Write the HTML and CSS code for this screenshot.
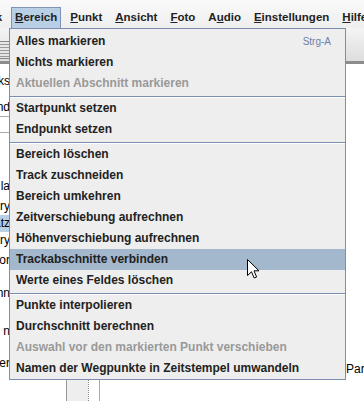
FILE: index.html
```html
<!DOCTYPE html>
<html lang="de">
<head>
  <meta charset="UTF-8" />
  <title>GpsPrune - Bereich</title>
  <link rel="stylesheet" href="styles.css">
</head>
<body>
<div class="screen">

  <!-- Menüleiste -->
  <div class="menubar">
    <span class="menu first">Track</span>
    <span class="menu active"><u>B</u>ereich</span>
    <span class="menu"><u>P</u>unkt</span>
    <span class="menu"><u>A</u>nsicht</span>
    <span class="menu"><u>F</u>oto</span>
    <span class="menu">A<u>u</u>dio</span>
    <span class="menu"><u>E</u>instellungen</span>
    <span class="menu"><u>H</u>ilfe</span>
  </div>

  <!-- Werkzeugleiste (fast ganz verdeckt) -->
  <div class="toolbar">
    <div class="tool-icon"></div>
  </div>

  <!-- Arbeitsbereich hinter dem Menü -->
  <div class="workspace">
    <div class="sidebar">
      <div class="cut row r-tracks"><span>Tracks</span></div>
      <div class="cut row r-stand"><span>Stand</span></div>
      <div class="rule"></div>
      <div class="rule"></div>
      <div class="cut row r-la"><span>Darstellung la</span></div>
      <div class="cut row r-small"><span>Summary</span></div>
      <div class="cut row selected"><span>Datensatz</span></div>
      <div class="cut row"><span>Summary</span></div>
      <div class="cut row r-small"><span>Editor</span></div>
      <div class="cut row r-gap"><span>Beginn</span></div>
      <div class="cut row r-gap2"><span>Ende n</span></div>
      <div class="cut row r-gap3"><span>Bearbeiter</span></div>
    </div>
    <div class="divider">
      <div class="divider-grip"></div>
    </div>
    <div class="details">
      <div class="details-label">Parameter</div>
    </div>
  </div>

  <!-- Aufgeklapptes Menü "Bereich" -->
  <div class="popup">
    <div class="item">Alles markieren<span class="accel">Strg-A</span></div>
    <div class="item">Nichts markieren</div>
    <div class="item disabled">Aktuellen Abschnitt markieren</div>
    <div class="sep"></div>
    <div class="item">Startpunkt setzen</div>
    <div class="item">Endpunkt setzen</div>
    <div class="sep"></div>
    <div class="item">Bereich löschen</div>
    <div class="item">Track zuschneiden</div>
    <div class="item">Bereich umkehren</div>
    <div class="item">Zeitverschiebung aufrechnen</div>
    <div class="item">Höhenverschiebung aufrechnen</div>
    <div class="item hover">Trackabschnitte verbinden</div>
    <div class="item">Werte eines Feldes löschen</div>
    <div class="sep"></div>
    <div class="item">Punkte interpolieren</div>
    <div class="item">Durchschnitt berechnen</div>
    <div class="item disabled">Auswahl vor den markierten Punkt verschieben</div>
    <div class="item">Namen der Wegpunkte in Zeitstempel umwandeln</div>
  </div>

  <!-- Mauszeiger -->
  <svg class="cursor" width="13" height="20" viewBox="0 0 13 20">
    <path d="M0.5 0.5 L0.5 16.5 L4.5 12.8 L7.2 19 L9.6 18 L7 11.8 L12 11.8 Z" fill="#fff" stroke="#000" stroke-width="1" stroke-linejoin="miter"/>
  </svg>

</div>
</body>
</html>
```

FILE: styles.css
```css
body {
  margin: 0;
  background: #fff;
  font-family: "Liberation Sans", Arial, sans-serif;
}
.screen {
  position: relative;
  width: 364px;
  height: 401px;
  overflow: hidden;
  background: #fff;
}

/* Menüleiste */
.menubar {
  display: flex;
  height: 21px;
  padding-top: 7px;
  background: linear-gradient(#fafafa, #eeeeee);
  white-space: nowrap;
}
.menu {
  height: 19px;
  line-height: 19px;
  padding: 0 3px;
  margin-right: 5px;
  border: 1px solid transparent;
  font-size: 11.5px;
  font-weight: bold;
  color: #222;
}
.menu.first {
  margin-left: -32px;
}
.menu.active {
  background: #b8cfe5;
  border-color: #7f94b8;
  border-bottom: none;
  height: 20px;
}
.menu u {
  text-decoration: underline;
  text-underline-offset: 1px;
}

/* Werkzeugleiste */
.toolbar {
  height: 36px;
  box-sizing: border-box;
  padding-top: 13px;
  background: linear-gradient(#f4f4f4, #dedede);
  border-bottom: 3px solid #8c8c8c;
}
.tool-icon {
  width: 9px;
  height: 16px;
  border-top: 1px solid #888;
  border-bottom: 1px solid #888;
  background: repeating-linear-gradient(#e6e6e6 0 2px, #9a9a9a 2px 3px);
}

/* Arbeitsbereich */
.workspace {
  display: flex;
  height: 337px;
}
.sidebar {
  width: 66px;
  padding-top: 9px;
  background: #fff;
}
.row {
  height: 17px;
  line-height: 17px;
  font-size: 12px;
  color: #000;
}
.cut {
  width: 10px;
  display: flex;
  justify-content: flex-end;
  overflow: hidden;
  white-space: nowrap;
}
.r-stand {
  margin-top: 9px;
}
.rule {
  width: 10px;
  height: 15px;
  border-top: 1px solid #aaa;
}
.rule:first-of-type {
  margin-top: 3px;
}
.r-la {
  margin-top: 30px;
}
.r-small {
  margin-top: 3px;
}
.row.selected {
  background: #b8cfe5;
}
.r-gap {
  margin-top: 16px;
}
.r-gap2 {
  margin-top: 21px;
}
.r-gap3 {
  margin-top: 15px;
}
.divider {
  width: 34px;
  display: flex;
  justify-content: flex-end;
  background: #eee;
  border-left: 1px solid #999;
  box-sizing: border-box;
}
.divider-grip {
  width: 10px;
  border-left: 1px dotted #888;
  border-right: 1px solid #aaa;
  background: #fff;
}
.details {
  flex: 1;
  padding-top: 298px;
  padding-left: 246px;
  font-size: 12px;
  white-space: nowrap;
  overflow: hidden;
}

/* Popup-Menü */
.popup {
  position: absolute;
  left: 9px;
  top: 28px;
  width: 335px;
  padding-top: 2px;
  background: #eeeeee;
  border: 1px solid #7b8db0;
}
.item {
  position: relative;
  height: 21px;
  line-height: 21px;
  padding-left: 6px;
  font-size: 12px;
  font-weight: bold;
  color: #222;
  white-space: nowrap;
}
.item.disabled {
  color: #999;
}
.item.hover {
  background: #a3b8cc;
}
.accel {
  position: absolute;
  right: 14px;
  top: 0;
  font-size: 10px;
  font-weight: normal;
  color: #6d7fa8;
}
.sep {
  height: 4px;
  box-sizing: border-box;
  border-top: 2px solid transparent;
  background-clip: padding-box;
}
.sep::before {
  content: "";
  display: block;
  height: 1px;
  background: #7b8db0;
}
.sep::after {
  content: "";
  display: block;
  height: 1px;
  background: #fff;
}

.cursor {
  position: absolute;
  left: 247px;
  top: 259px;
}
```
